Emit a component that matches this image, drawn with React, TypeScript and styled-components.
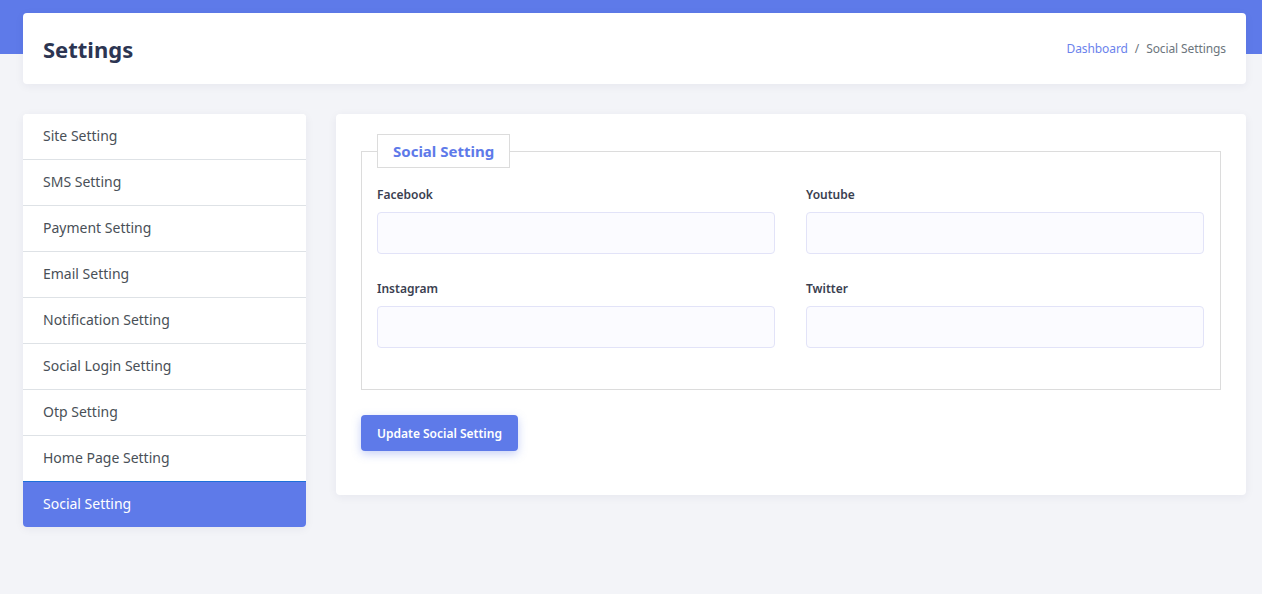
import styled, { createGlobalStyle } from 'styled-components';

const GlobalStyle = createGlobalStyle`
  * { box-sizing: border-box; }
  body {
    margin: 0;
    background: #f3f4f8;
    font-family: "Noto Sans", "Open Sans", sans-serif;
    color: #343a40;
  }
`;

const Page = styled.div`
  min-height: 594px;
  background: linear-gradient(#5e7ae9 0, #5e7ae9 54px, #f3f4f8 54px);
  padding: 13px 16px 40px 23px;
`;

const Card = styled.div`
  background: #fff;
  border-radius: 4px;
  box-shadow: 0 2px 10px rgba(30, 40, 90, 0.06);
`;

const Header = styled(Card)`
  height: 71px;
  display: flex;
  align-items: center;
  justify-content: space-between;
  padding: 0 20px;
`;

const Title = styled.h1`
  margin: 0;
  font-size: 22px;
  font-weight: 700;
  color: #2c3552;
`;

const Crumbs = styled.div`
  font-size: 12px;
  color: #6c757d;
  display: flex;
  gap: 7px;
  letter-spacing: -0.1px;
`;

const CrumbLink = styled.span`
  color: #6b82ec;
`;

const Body = styled.div`
  display: grid;
  grid-template-columns: 283px 1fr;
  gap: 30px;
  margin-top: 30px;
  align-items: start;
`;

const Menu = styled(Card)`
  overflow: hidden;
`;

const MenuItem = styled.div<{ $active?: boolean }>`
  height: 46px;
  display: flex;
  align-items: center;
  padding: 0 20px 2px;
  font-size: 14px;
  color: ${p => (p.$active ? '#fff' : '#495057')};
  background: ${p => (p.$active ? '#5e7ae9' : '#fff')};
  border-bottom: 1px solid #dee2e6;
  border-top: ${p => (p.$active ? '1px solid #1e6fd9' : 'none')};
  margin-top: ${p => (p.$active ? '-1px' : '0')};
  &:last-child { border-bottom: none; }
`;

const Panel = styled(Card)`
  padding: 20px 25px 44px 25px;
`;

const Fieldset = styled.fieldset`
  margin: 0;
  border: 1px solid #dcdcdc;
  padding: 18px 16px 41px 15px;
`;

const Legend = styled.legend`
  padding: 7px 15px;
  border: 1px solid #dcdcdc;
  font-size: 15px;
  font-weight: 700;
  color: #5e7ae9;
  line-height: 18px;
`;

const Grid = styled.div`
  display: grid;
  grid-template-columns: 1fr 1fr;
  column-gap: 31px;
  row-gap: 26px;
`;

const Field = styled.div`
  display: flex;
  flex-direction: column;
`;

const Label = styled.label`
  font-size: 12px;
  font-weight: 600;
  color: #3a4050;
  margin-bottom: 9px;
`;

const Input = styled.input`
  height: 42px;
  border: 1px solid #e2e3f8;
  background: #fbfbff;
  border-radius: 4px;
  padding: 0 12px;
  font: inherit;
  outline: none;
`;

const Button = styled.button`
  margin-top: 25px;
  height: 36px;
  padding: 0 16px;
  border: none;
  border-radius: 4px;
  background: #5e7ae9;
  color: #fff;
  font-family: inherit;
  font-size: 12px;
  font-weight: 600;
  box-shadow: 0 3px 10px rgba(94, 122, 233, 0.35);
  cursor: pointer;
`;

const menu = [
  'Site Setting',
  'SMS Setting',
  'Payment Setting',
  'Email Setting',
  'Notification Setting',
  'Social Login Setting',
  'Otp Setting',
  'Home Page Setting',
  'Social Setting',
];

const fields = ['Facebook', 'Youtube', 'Instagram', 'Twitter'];

export default function App() {
  return (
    <>
      <GlobalStyle />
      <Page>
        <Header>
          <Title>Settings</Title>
          <Crumbs>
            <CrumbLink>Dashboard</CrumbLink>
            <span>/</span>
            <span>Social Settings</span>
          </Crumbs>
        </Header>
        <Body>
          <Menu>
            {menu.map(m => (
              <MenuItem key={m} $active={m === 'Social Setting'}>
                {m}
              </MenuItem>
            ))}
          </Menu>
          <Panel>
            <Fieldset>
              <Legend>Social Setting</Legend>
              <Grid>
                {fields.map(f => (
                  <Field key={f}>
                    <Label>{f}</Label>
                    <Input />
                  </Field>
                ))}
              </Grid>
            </Fieldset>
            <Button>Update Social Setting</Button>
          </Panel>
        </Body>
      </Page>
    </>
  );
}
